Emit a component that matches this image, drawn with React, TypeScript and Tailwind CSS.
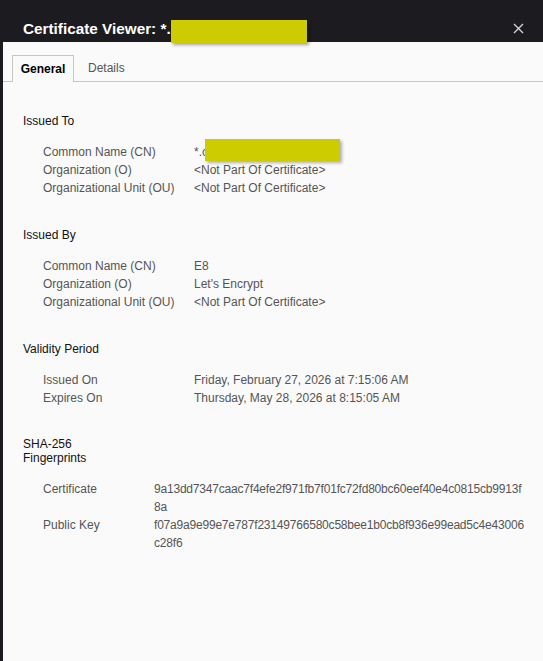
import React from "react";

const font = { fontFamily: '"Segoe UI", "Liberation Sans", Arial, sans-serif' };

function Row({ label, value, children }: { label: string; value?: string; children?: React.ReactNode }) {
  return (
    <div className="flex h-[18px] items-center">
      <div className="w-[151px] shrink-0">{label}</div>
      <div className="relative">{children ?? value}</div>
    </div>
  );
}

function Section({ title, children }: { title: React.ReactNode; children: React.ReactNode }) {
  return (
    <div className="mb-[31px]">
      <div className="text-[12px] text-[#111] leading-[14px] mb-[15px]">{title}</div>
      <div className="pl-[20px] text-[12px] text-[#555]">{children}</div>
    </div>
  );
}

export default function App() {
  return (
    <div className="w-[543px] h-[661px] bg-[#1c1b20] flex flex-col overflow-hidden" style={font}>
      <div className="h-[42px] shrink-0 flex items-end relative">
        <div className="pl-[23px] pb-[3px] text-white text-[15.3px] font-semibold leading-[20px] flex items-center">
          Certificate Viewer: *.
        </div>
        <div className="absolute left-[171px] top-[20px] w-[136px] h-[23px] bg-[#cccc00] shadow-[2px_2px_3px_rgba(0,0,0,0.35)] z-10" />
        <svg className="absolute left-[513px] top-[23px]" width="11" height="11" viewBox="0 0 11 11">
          <path d="M1 1L10 10M10 1L1 10" stroke="#d4d4d4" strokeWidth="1.4" />
        </svg>
      </div>
      <div className="flex-1 ml-[3px] bg-[#fafafa] flex flex-col">
        <div className="mt-[13px] flex items-end h-[27px] border-b border-[#c6c6c6]">
          <div className="ml-[9px] w-[62px] h-[27px] border border-b-0 border-[#c6c6c6] bg-[#fafafa] -mb-px flex items-center justify-center text-[12px] text-black font-semibold">
            General
          </div>
          <div className="ml-[14px] h-[26px] flex items-center text-[12px] text-[#555]">Details</div>
        </div>
        <div className="pl-[20px] pt-[32px]">
          <Section title="Issued To">
            <Row label="Common Name (CN)">
              <span>*.c</span>
              <span className="absolute left-[11px] top-[-4px] w-[135px] h-[22px] bg-[#cccc00] shadow-[2px_2px_3px_rgba(0,0,0,0.3)]" />
            </Row>
            <Row label="Organization (O)" value="<Not Part Of Certificate>" />
            <Row label="Organizational Unit (OU)" value="<Not Part Of Certificate>" />
          </Section>
          <Section title="Issued By">
            <Row label="Common Name (CN)" value="E8" />
            <Row label="Organization (O)" value="Let's Encrypt" />
            <Row label="Organizational Unit (OU)" value="<Not Part Of Certificate>" />
          </Section>
          <Section title="Validity Period">
            <Row label="Issued On" value="Friday, February 27, 2026 at 7:15:06 AM" />
            <Row label="Expires On" value="Thursday, May 28, 2026 at 8:15:05 AM" />
          </Section>
          <div>
            <div className="text-[12px] text-[#111] leading-[14px] mb-[15px] -mt-[1px]">
              <div>SHA-256</div>
              <div>Fingerprints</div>
            </div>
            <div className="pl-[20px] text-[12px] text-[#555] leading-[18px]">
              <div className="flex">
                <div className="w-[111px] shrink-0">Certificate</div>
                <div className="whitespace-nowrap tracking-[-0.2px]">
                  <div>9a13dd7347caac7f4efe2f971fb7f01fc72fd80bc60eef40e4c0815cb9913f</div>
                  <div>8a</div>
                </div>
              </div>
              <div className="flex">
                <div className="w-[111px] shrink-0">Public Key</div>
                <div className="whitespace-nowrap tracking-[-0.2px]">
                  <div>f07a9a9e99e7e787f23149766580c58bee1b0cb8f936e99ead5c4e43006</div>
                  <div>c28f6</div>
                </div>
              </div>
            </div>
          </div>
        </div>
      </div>
    </div>
  );
}
